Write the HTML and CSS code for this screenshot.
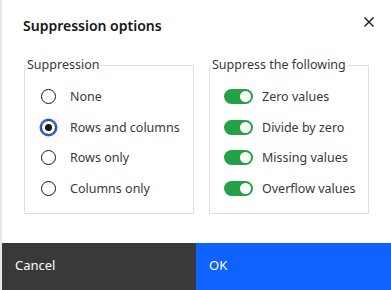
FILE: index.html
```html
<!DOCTYPE html>
<html>
<head>
<meta charset="utf-8">
<link rel="stylesheet" href="styles.css">
</head>
<body>
<div class="dialog">
  <div class="header">
    <h1 class="title">Suppression options</h1>
    <button class="close" aria-label="Close">
      <svg width="12" height="12" viewBox="0 0 12 12"><path d="M1.5 1.5 L10.5 10.5 M10.5 1.5 L1.5 10.5" stroke="#161616" stroke-width="1.4" fill="none"/></svg>
    </button>
  </div>
  <div class="content">
    <fieldset class="group group-left">
      <legend>Suppression</legend>
      <label class="row"><span class="radio"></span><span>None</span></label>
      <label class="row"><span class="radio checked"></span><span>Rows and columns</span></label>
      <label class="row"><span class="radio"></span><span>Rows only</span></label>
      <label class="row"><span class="radio"></span><span>Columns only</span></label>
    </fieldset>
    <fieldset class="group group-right">
      <legend>Suppress the following</legend>
      <label class="row"><span class="toggle"></span><span>Zero values</span></label>
      <label class="row"><span class="toggle"></span><span>Divide by zero</span></label>
      <label class="row"><span class="toggle"></span><span>Missing values</span></label>
      <label class="row"><span class="toggle"></span><span>Overflow values</span></label>
    </fieldset>
  </div>
  <div class="footer">
    <button class="btn btn-secondary">Cancel</button>
    <button class="btn btn-primary">OK</button>
  </div>
</div>
</body>
</html>
```
FILE: styles.css
```css
* { box-sizing: border-box; }
html, body { margin: 0; padding: 0; background: #fff; }
body {
  font-family: "Noto Sans", "Open Sans", sans-serif;
  color: #161616;
  width: 391px;
  height: 290px;
  overflow: hidden;
}
.dialog {
  height: 290px;
  display: flex;
  flex-direction: column;
  border-left: 2px solid #e8e8e8;
}
.header {
  display: flex;
  justify-content: space-between;
  align-items: flex-start;
  padding: 16px 16px 0 21px;
  height: 57px;
}
.title {
  margin: 0;
  font-size: 14px;
  font-weight: 600;
  line-height: 20px;
  color: #161616;
}
.close {
  border: 0;
  background: transparent;
  padding: 0;
  margin-top: 0;
  width: 12px;
  height: 12px;
  display: flex;
}
.content {
  display: flex;
  gap: 15px;
  padding-left: 22px;
  height: 186px;
}
.group {
  margin: 0;
  border: 1px solid #e0e0e0;
  padding: 8px 0 0 14px;
  height: 157px;
  display: flex;
  flex-direction: column;
}
.group-left { width: 170px; padding-left: 16px; }
.group-right { width: 160px; }
legend {
  font-size: 12.5px;
  color: #393939;
  padding: 0 1px;
  line-height: 16px;
}
.group-left legend { margin-left: -15px; }
.group-right legend { margin-left: -13px; }
.row {
  display: flex;
  align-items: center;
  height: 30.8px;
  font-size: 12.5px;
  color: #393939;
}
.radio {
  width: 15px;
  height: 15px;
  border: 1.3px solid #161616;
  border-radius: 50%;
  display: inline-flex;
  align-items: center;
  justify-content: center;
  flex: none;
}
.radio.checked {
  box-shadow: 0 0 0 1.5px #0f62fe;
}
.radio.checked::after {
  content: "";
  width: 7px;
  height: 7px;
  border-radius: 50%;
  background: #161616;
}
.group-left .row { gap: 14px; }
.group-right .row { gap: 9px; }
.toggle {
  width: 29px;
  height: 15px;
  border-radius: 8px;
  background: #24a148;
  display: inline-flex;
  align-items: center;
  justify-content: flex-end;
  padding-right: 2px;
  flex: none;
}
.toggle::after {
  content: "";
  width: 11px;
  height: 11px;
  border-radius: 50%;
  background: #fff;
}
.footer {
  display: grid;
  grid-template-columns: 194px 1fr;
  height: 47px;
}
.btn {
  border: 0;
  margin: 0;
  font-family: inherit;
  font-size: 13px;
  color: #fff;
  text-align: left;
  padding: 0 0 4px 13px;
}
.btn-secondary { background: #393939; }
.btn-primary { background: #0f62fe; }
```
